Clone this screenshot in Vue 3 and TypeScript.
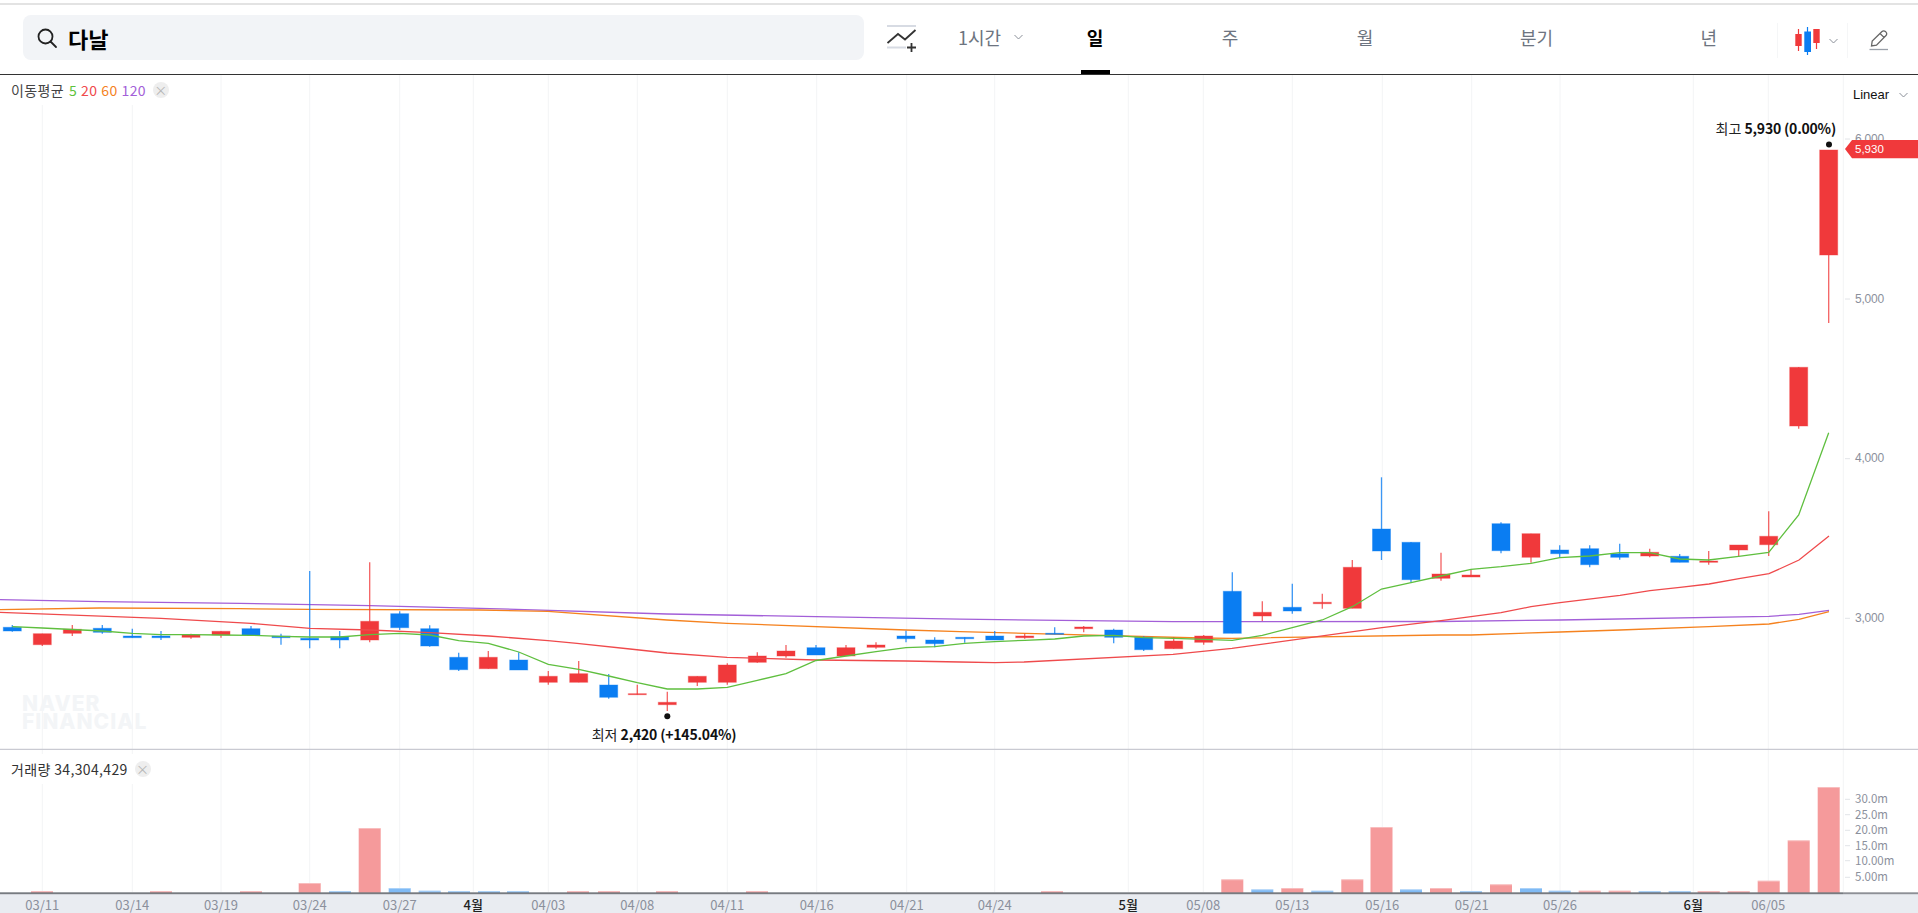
<script setup lang="ts">
interface Candle { wt: number; wb: number; bt: number; bb: number; up: boolean }
const RED = '#f0393b'
const BLUE = '#0a7df2'
const rows: [number, number, number, number, number][] = [
  [0, 625, 631.7, 627.3, 631], [1, 633.7, 646, 633.7, 644.7], [1, 625, 636, 629.3, 633.3], [0, 625, 633.7, 628.3, 632.3],
  [0, 628.7, 637.7, 636, 637.7], [0, 631, 640, 636, 637.7], [1, 633.7, 638.7, 635, 637.3], [1, 631, 637.7, 631.3, 635],
  [0, 626, 636, 628.7, 635], [0, 633.7, 644.7, 636, 637.7], [0, 571, 648.3, 638.3, 640], [0, 631, 648.3, 636.7, 640],
  [1, 562.3, 642.3, 621.3, 640], [0, 611.3, 630, 613.7, 627.7], [0, 625.3, 646.7, 628.7, 646], [0, 652.7, 671, 657.3, 669.7],
  [1, 651, 668.7, 657.3, 668.7], [0, 652.3, 670, 660, 670], [1, 671, 684.7, 676.3, 682.3], [1, 661, 682.3, 673.7, 682.3],
  [0, 674, 698.7, 685, 697.3], [1, 684.7, 694.7, 693.7, 694.7], [1, 691.7, 711, 702.3, 704.7], [1, 676.3, 686, 676.3, 682.3],
  [1, 663.3, 684.7, 665, 682.3], [1, 652.3, 662.7, 656, 662.3], [1, 645, 657.7, 651, 656], [0, 645, 655, 647.7, 655],
  [1, 645, 656, 647.7, 656], [1, 642.3, 648.7, 645, 647.3], [0, 630.7, 642.3, 636, 638.7], [0, 637.3, 647.3, 640, 643.7],
  [0, 637.3, 642.7, 637.3, 638.7], [0, 631, 640, 636, 640], [1, 633.7, 638.7, 636, 637.7], [0, 627.3, 634.3, 633.3, 634.3],
  [1, 626, 632.3, 627, 628.7], [0, 628.7, 643.3, 630, 637.3], [0, 636.3, 651, 637.3, 649.7], [1, 637.3, 648.7, 641, 648.7],
  [1, 635, 644.7, 636, 642.3], [0, 572.3, 633.3, 591.3, 633.3], [1, 601.3, 621, 612.3, 616], [0, 583.7, 613.7, 607.3, 611],
  [1, 593.7, 608.7, 602.3, 603.7], [1, 560, 608.3, 567.3, 608.3], [0, 477.3, 560, 529, 551], [0, 542, 582, 542.3, 579.7],
  [1, 552.7, 580.7, 574, 578.3], [1, 569.3, 577, 575, 577], [0, 522.3, 553.3, 523.7, 550.7], [1, 533.7, 562.7, 533.7, 557.3],
  [0, 545.3, 557.3, 550, 553.7], [0, 545.3, 567.3, 548.7, 564.7], [0, 543.7, 559.7, 553.7, 557.3], [1, 548.7, 557.3, 552.3, 556],
  [0, 554, 562.3, 556.3, 562.3], [1, 551, 564.7, 561, 562.3], [1, 545, 556, 545, 550], [1, 511.3, 556, 536.3, 544.7],
  [1, 367, 428.7, 367.3, 426], [1, 150, 323, 150, 255],
]
const xs: number[] = [12.3, 42.3, 72.3, 102.3, 132.3, 161, 191, 221, 251, 281, 309.7, 339.7, 369.7, 399.7, 429.7, 458.7, 488.3, 518.7, 548.3, 578.7, 608.7, 637.3, 667.3, 697.3, 727.3, 757.3, 786, 816, 846, 876, 906, 934.7, 964.7, 994.7, 1024.7, 1054.7, 1083.7, 1113.7, 1143.7, 1173.7, 1203.7, 1232.3, 1262.3, 1292.3, 1322.3, 1352.3, 1381.5, 1411, 1441, 1471, 1501, 1531, 1559.7, 1589.7, 1619.7, 1649.7, 1679.7, 1708.7, 1738.7, 1768.7, 1798.7, 1828.7]
const candles: (Candle & { x: number })[] = rows.map((r, i) => ({
  x: xs[i], up: r[0] === 1, wt: r[1], wb: r[2], bt: r[3], bb: r[4],
}))

const ma5: number[] = [626.7, 628, 629.5, 631, 633.3, 634.7, 634.7, 635, 635.3, 636.3, 637, 637, 634.7, 633.3, 635, 640.7, 643.3, 652, 664.3, 669.3, 676, 682.7, 689, 689, 687.3, 680.3, 673.7, 660.5, 656, 651.7, 647.7, 646.7, 643.3, 641.7, 640.3, 639, 636, 635.3, 637.7, 638.3, 639.3, 640.3, 635.3, 627.7, 620, 606.7, 589, 582.7, 576, 569.3, 566.7, 563.3, 557.7, 556, 552.7, 552.7, 559, 560, 556.3, 552.3, 515, 432.7]
const ma5Pts = ma5.map((y, i) => `${xs[i]},${y}`).join(' ')
const ma20Pts = '0,612.3 161,618.3 251,623.3 310,628.3 370,630 430,632.7 489,636 548,640.7 577,643.3 630,649 667,653 727,657.3 816,660 906,661 960,662 995,662.7 1024,662 1173,654.3 1232,648.3 1382,627.7 1441,620.7 1471,616.7 1501,612.7 1531,606.7 1560,602.7 1620,595.3 1650,590.7 1680,587.3 1709,584 1739,578.7 1769,573.7 1799,560 1829,536'
const ma60Pts = '0,609.7 100,608 240,608.7 310,609.3 480,610 548,611.3 667,620 727,623.3 906,630 960,631.7 1200,638 1232,638.3 1441,635 1471,635 1560,632 1620,630 1709,626.7 1769,624 1799,619.3 1829,611.7'
const ma120Pts = '0,599.7 100,601.7 240,603.3 370,605.7 480,608.3 667,614 816,616.7 960,619.2 1173,621.7 1441,621.5 1560,620 1769,616.3 1799,614.3 1829,610.3'

const xLabels: { x: number; t: string; month?: boolean }[] = [
  { x: 42.3, t: '03/11' }, { x: 132.3, t: '03/14' }, { x: 221, t: '03/19' }, { x: 309.7, t: '03/24' }, { x: 399.7, t: '03/27' },
  { x: 473.3, t: '4월', month: true }, { x: 548.3, t: '04/03' }, { x: 637.3, t: '04/08' }, { x: 727.3, t: '04/11' }, { x: 816.7, t: '04/16' },
  { x: 906.7, t: '04/21' }, { x: 994.7, t: '04/24' }, { x: 1128.3, t: '5월', month: true }, { x: 1203.3, t: '05/08' }, { x: 1292.3, t: '05/13' },
  { x: 1382.3, t: '05/16' }, { x: 1471.7, t: '05/21' }, { x: 1560, t: '05/26' }, { x: 1693.3, t: '6월', month: true }, { x: 1768.3, t: '06/05' },
]
const priceLabels = [{ y: 139, t: '6,000' }, { y: 299, t: '5,000' }, { y: 458.7, t: '4,000' }, { y: 618.3, t: '3,000' }]
const volLabels = [{ y: 799.3, t: '30.0m' }, { y: 814.7, t: '25.0m' }, { y: 830.3, t: '20.0m' }, { y: 845.7, t: '15.0m' }, { y: 860.7, t: '10.00m' }, { y: 877.3, t: '5.00m' }]

const vols: [number, number, boolean][] = [
  [42, 891, true], [161, 891, true], [251, 891, true], [309.7, 883, true], [340, 891, false], [369.7, 828, true], [399.7, 888, false],
  [429.7, 890.7, false], [459, 891, false], [489, 891, false], [518, 891, false], [578, 891, true], [609, 891, true], [667, 891, true],
  [757, 891, true], [1052, 891, true], [1232.3, 879.3, true], [1262.3, 889.3, false], [1292.3, 888, true], [1322.3, 890.7, false], [1352.3, 879.3, true],
  [1381.5, 827, true], [1411, 889.3, false], [1441, 888, true], [1471, 891, false], [1501, 884.3, true], [1531, 888, false], [1559.7, 890.7, false],
  [1589.7, 890.7, true], [1619.7, 890.7, true], [1649.7, 891, false], [1679.7, 891, false], [1708.7, 891, true], [1738.7, 891, true], [1768.7, 880.7, true],
  [1798.7, 840.3, true], [1828.7, 787, true],
]
const tabs = ['일', '주', '월', '분기', '년']
</script>

<template>
  <div class="page">
    <div class="stripe"></div>
    <header class="head">
      <div class="search">
        <svg class="mag" width="22" height="22" viewBox="0 0 22 22">
          <circle cx="9.5" cy="9.5" r="7" fill="none" stroke="#222" stroke-width="1.8" />
          <path d="M14.5 14.5 L20 20" fill="none" stroke="#222" stroke-width="1.8" stroke-linecap="round" />
        </svg>
        <span class="name">다날</span>
      </div>
      <div class="add">
        <svg width="30" height="28" viewBox="0 0 30 28">
          <path d="M0 2 H29 M0 23.5 H19" stroke="#d7dbe3" stroke-width="2" fill="none" />
          <path d="M.5 19 L11 10 L18 15.5 L28.5 6" stroke="#333" stroke-width="1.8" fill="none" />
          <path d="M24.5 19 V28 M20 23.5 H29" stroke="#333" stroke-width="1.8" fill="none" />
        </svg>
      </div>
      <div class="period">
        <span class="plabel">1시간</span>
        <svg class="chev" width="9" height="6" viewBox="0 0 9 6"><path d="M.5 1 L4.5 5 L8.5 1" fill="none" stroke="#8a8f98" /></svg>
      </div>
      <nav class="tabs">
        <span v-for="(t, i) in tabs" :key="t" class="tab" :class="{ on: i === 0 }">{{ t }}</span>
      </nav>
      <div class="type">
        <svg width="26" height="30" viewBox="0 0 26 30">
          <path d="M3.5 3 V25 M21.5 3 V23" stroke="#f0393b" stroke-width="1.2" />
          <path d="M12.5 1 V29" stroke="#0a7df2" stroke-width="1.2" />
          <rect x=".3" y="8" width="6.4" height="12" fill="#f0393b" />
          <rect x="9.3" y="5.5" width="6.7" height="20.5" fill="#0a7df2" />
          <rect x="18.3" y="3" width="6.4" height="14" fill="#f0393b" />
        </svg>
        <svg class="chev2" width="9" height="6" viewBox="0 0 9 6"><path d="M.5 1 L4.5 5 L8.5 1" fill="none" stroke="#8a8f98" /></svg>
      </div>
      <div class="pen">
        <svg width="20" height="22" viewBox="0 0 20 22">
          <path d="M2.5 17 L3.2 12 L13 2.5 A2.4 2.4 0 0 1 16.4 2.5 L17 3.1 A2.4 2.4 0 0 1 17 6.5 L7.5 16.2 Z M11 4.5 L15.3 8.6" fill="none" stroke="#666" stroke-width="1.3" />
          <path d="M.5 20.5 H19" stroke="#9aa0a9" stroke-width="1.3" />
        </svg>
      </div>
    </header>

    <main class="chart">
      <svg class="plot" width="1918" height="838" viewBox="0 75 1918 838">
        <rect x="0" y="894" width="1918" height="19" fill="#e9ecf1" />
        <g stroke="#f3f4f6" stroke-width="1">
          <line v-for="l in xLabels" :key="l.t" :x1="l.x" :x2="l.x" y1="75" y2="892" />
          <line x1="1843.3" x2="1843.3" y1="75" y2="892" />
        </g>
        <line x1="0" x2="1918" y1="749.3" y2="749.3" stroke="#c9cad2" stroke-width="1.2" />

        <text class="wm"><tspan x="22" y="711">NAVER</tspan><tspan x="22" y="729">FINANCIAL</tspan></text>

        <polyline :points="ma120Pts" fill="none" stroke="#a35fd8" stroke-width="1.3" />
        <polyline :points="ma60Pts" fill="none" stroke="#f5821f" stroke-width="1.3" />

        <g v-for="(c, i) in candles" :key="i">
          <line :x1="c.x" :x2="c.x" :y1="c.wt" :y2="c.wb" :stroke="c.up ? RED : BLUE" stroke-width="1.3" stroke-opacity=".8" />
          <rect :x="c.x - 9" :y="c.bt" width="18" :height="Math.max(c.bb - c.bt, 1)" :fill="c.up ? RED : BLUE" :stroke="c.up ? RED : BLUE" stroke-opacity=".4" stroke-width="1" />
        </g>

        <polyline :points="ma20Pts" fill="none" stroke="#ef4a4c" stroke-width="1.3" />
        <polyline :points="ma5Pts" fill="none" stroke="#5fbf3f" stroke-width="1.3" />

        <g v-for="(v, i) in vols" :key="'v' + i">
          <rect :x="v[0] - 11" :y="v[1]" width="22" :height="893 - v[1]" :fill="v[2] ? '#f59a9b' : '#7fbaf5'" />
          <rect :x="v[0] - 11" :y="v[1]" width="22" height="1" fill="#ffffff" fill-opacity=".35" />
        </g>
        <rect x="0" y="892.3" width="1843" height="1.9" fill="#777b80" />
        <rect x="1843" y="892.3" width="75" height="1.9" fill="#8d9096" />

        <g stroke="#e2e4e8">
          <line v-for="p in priceLabels" :key="p.t" x1="1845" x2="1850" :y1="p.y" :y2="p.y" />
          <line v-for="p in volLabels" :key="p.t" x1="1845" x2="1850" :y1="p.y" :y2="p.y" />
        </g>
        <text v-for="p in priceLabels" :key="p.t" x="1855" :y="p.y - 0.5" class="tick">{{ p.t }}</text>
        <text v-for="p in volLabels" :key="p.t" x="1855" :y="p.y - 1" class="vtick">{{ p.t }}</text>
        <text v-for="l in xLabels" :key="'t' + l.t" :x="l.x" y="904.5" class="xl" :class="{ mon: l.month }" text-anchor="middle">{{ l.t }}</text>

        <path d="M1845 149 L1852 140 H1918 V158.3 H1852 Z" :fill="RED" />
        <text x="1855" y="148.6" class="tag">5,930</text>

        <circle cx="1829" cy="144.5" r="3" fill="#111" />
        <text x="1836" y="128" class="anno" text-anchor="end">최고 <tspan class="strong">5,930 (0.00%)</tspan></text>
        <circle cx="667.3" cy="716.3" r="3" fill="#111" />
        <text x="664" y="734" class="anno" text-anchor="middle">최저 <tspan class="strong">2,420 (+145.04%)</tspan></text>
      </svg>

      <div class="legend ma">
        <span class="lab">이동평균</span>
        <span class="n g">5</span><span class="n r">20</span><span class="n o">60</span><span class="n p">120</span>
        <span class="x">×</span>
      </div>
      <div class="scale">Linear
        <svg width="9" height="6" viewBox="0 0 9 6"><path d="M.5 1 L4.5 5 L8.5 1" fill="none" stroke="#8a8f98" /></svg>
      </div>
      <div class="legend vol">
        <span class="lab">거래량 34,304,429</span>
        <span class="x">×</span>
      </div>
    </main>
  </div>
</template>

<style>
html, body { margin: 0; background: #fff; }
</style>

<style scoped>
.page {
  width: 1918px;
  height: 913px;
  overflow: hidden;
  display: flex;
  flex-direction: column;
  font-family: "Noto Sans CJK KR", "Noto Sans", sans-serif;
  background: #fff;
}
.stripe { height: 2px; margin-top: 3px; background: #e3e3e3; flex: none; }
.head {
  flex: none;
  height: 69px;
  display: flex;
  align-items: stretch;
  border-bottom: 1px solid #333;
  padding-left: 23px;
}
.search {
  width: 841px;
  height: 45px;
  margin-top: 10px;
  border-radius: 8px;
  background: #f2f4f7;
  display: flex;
  align-items: center;
  padding-left: 13px;
  box-sizing: border-box;
}
.mag { margin-right: 10px; flex: none; }
.name { font-size: 22px; font-weight: 700; color: #000; }
.add { margin-left: 23px; width: 30px; padding-top: 19px; box-sizing: border-box; }
.add svg { display: block; }
.period {
  margin-left: 41px;
  width: 64px;
  flex: none;
  display: flex;
  align-items: center;
  padding-bottom: 6px;
  font-size: 18px;
  color: #6d7480;
  box-sizing: border-box;
}
.plabel { white-space: nowrap; flex: none; }
.chev { margin-left: 13px; flex: none; }
.tabs {
  margin-left: 5.5px;
  display: grid;
  grid-template-columns: 135px 135px 135px 208px 136.5px;
}
.tab {
  position: relative;
  display: flex;
  align-items: center;
  justify-content: center;
  padding-bottom: 6px;
  font-size: 18px;
  color: #6d7480;
}
.tab.on { color: #000; font-weight: 700; }
.tab.on::after {
  content: "";
  position: absolute;
  left: 50%;
  bottom: 0;
  width: 29px;
  height: 4px;
  margin-left: -14.5px;
  background: #000;
}
.type {
  width: 71px;
  height: 35px;
  margin-top: 18px;
  box-sizing: border-box;
  border-left: 1px solid #f5f6f7;
  border-right: 1px solid #f5f6f7;
  display: flex;
  align-items: center;
  padding-left: 17px;
}
.chev2 { margin-left: 8px; }
.pen { margin-left: 21px; padding-top: 24px; }
.pen svg { display: block; }
.chart { position: relative; flex: 1; }
.plot { display: block; }
.wm { font-family: Inter, "Noto Sans", sans-serif; font-weight: 800; font-size: 21px; fill: #f3f5f7; letter-spacing: 1px; }
.tick { font-family: "Liberation Sans", sans-serif; font-size: 12px; letter-spacing: -.2px; fill: #8b909c; dominant-baseline: central; }
.vtick { font-size: 11.5px; fill: #8b909c; dominant-baseline: central; }
.xl { font-size: 13px; fill: #8b909c; dominant-baseline: central; }
.xl.mon { fill: #222; font-weight: 500; }
.tag { font-family: "Liberation Sans", sans-serif; font-size: 11.5px; fill: #fff; dominant-baseline: central; }
.anno { font-size: 14px; fill: #222; dominant-baseline: central; }
.strong { font-weight: 700; fill: #111; letter-spacing: -.2px; }
.legend {
  position: absolute;
  left: 0;
  display: flex;
  align-items: center;
  background: #fff;
  padding-left: 11px;
  padding-right: 10px;
  height: 30px;
  font-size: 14px;
  letter-spacing: .35px;
  color: #444;
}
.legend.ma { top: 0; }
.legend.vol { top: 679px; color: #333; }
.n { margin-left: 4px; }
.g { color: #5ec23c; margin-left: 5px; }
.r { color: #f04a4c; }
.o { color: #f5821f; }
.p { color: #a35fd8; }
.x {
  width: 16px;
  height: 16px;
  margin-left: 7px;
  border-radius: 50%;
  background: #eeeeee;
  color: #b5b5b5;
  font-size: 13px;
  line-height: 15px;
  text-align: center;
}
.scale {
  position: absolute;
  left: 1853px;
  top: 12px;
  display: flex;
  align-items: center;
  gap: 10px;
  font-family: "Liberation Sans", sans-serif;
  font-size: 13px;
  color: #111;
}
</style>
